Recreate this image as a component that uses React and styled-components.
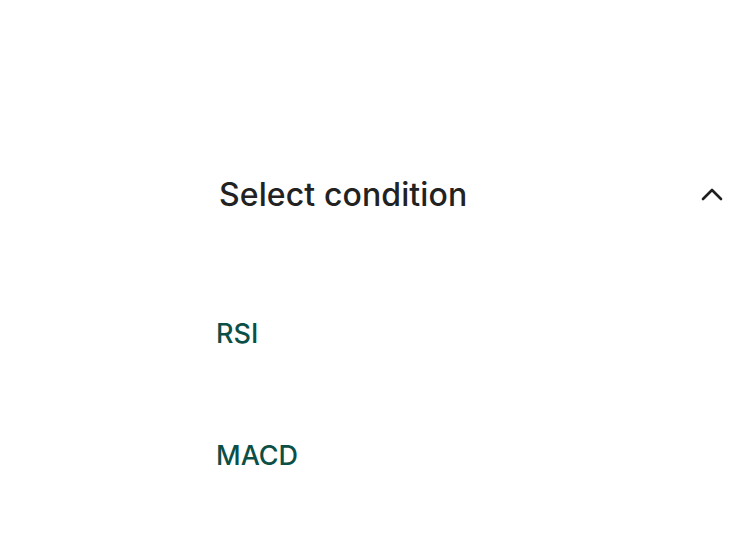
import React from "react";
import styled, { createGlobalStyle } from "styled-components";

const Global = createGlobalStyle`
  body {
    margin: 0;
    background: #fff;
    font-family: Inter, "Noto Sans", sans-serif;
  }
`;

const Panel = styled.div`
  width: 748px;
  height: 560px;
  box-sizing: border-box;
  padding: 164px 24px 0 216px;
`;

const Header = styled.div`
  display: flex;
  align-items: center;
  justify-content: space-between;
  height: 60px;
  padding-left: 3px;
`;

const Title = styled.span`
  font-size: 32px;
  font-weight: 500;
  color: #222;
  letter-spacing: 0.1px;
`;

const Chevron = styled.svg`
  width: 24px;
  height: 24px;
  color: #1f1f1f;
`;

const List = styled.ul`
  list-style: none;
  margin: 0;
  padding: 0;
  padding-top: 94px;
  display: flex;
  flex-direction: column;
  gap: 90px;
`;

const Option = styled.li`
  font-size: 27px;
  line-height: 32px;
  font-weight: 500;
  color: #0c4f46;
`;

const App = () => {
  return (
    <>
      <Global />
      <Panel>
        <Header>
          <Title>Select condition</Title>
          <Chevron viewBox="0 0 24 24" fill="none">
            <path
              d="M3 17 L12 8 L21 17"
              stroke="currentColor"
              strokeWidth="2.6"
              strokeLinecap="round"
              strokeLinejoin="round"
            />
          </Chevron>
        </Header>
        <List>
          <Option>RSI</Option>
          <Option>MACD</Option>
        </List>
      </Panel>
    </>
  );
};

export default App;
